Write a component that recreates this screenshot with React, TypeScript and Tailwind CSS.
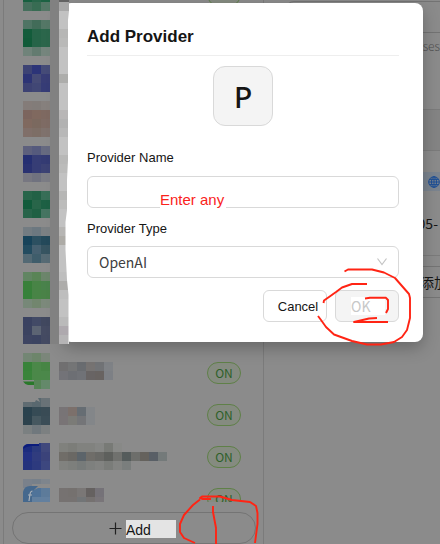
import { useState, type ReactNode } from "react";

type Provider = {
  offset: number;
  avatar: string[][];
  detail?: ReactNode;
  nameTop?: number;
  name?: string[][];
};

const CELL = 9;

const providers: Provider[] = [
  { offset: 19, avatar: [["#175f3f", "#28664a", "#1c6243"], ["#456f5c", "#386c53", "#547766"]] },
  { offset: 4, avatar: [["#4f7464", "#426c59", "#547766"], ["#135c3b", "#266448", "#2b664b"], ["#115b39", "#266448", "#2b664b"], ["#70837a", "#637b70", "#75857d"]] },
  { offset: 7, avatar: [["#3d4374", "#2c3478", "#454b77"], ["#2d3475", "#464b76", "#383d75"], ["#3d4273", "#414775", "#363c76"]] },
  { offset: 1, avatar: [["#847c79", "#827c79", "#86807d"], ["#7c655e", "#80695f", "#7e6961"], ["#80695f", "#7b695f", "#7e6b64"], ["#806f69", "#7d6e66", "#7f726d"]] },
  { offset: 4, avatar: [["#5d607d", "#555a7d", "#666a80"], ["#252f72", "#363d75", "#343b73"], ["#2a3271", "#363d75", "#3c4274"], ["#777781", "#70727f", "#7b7c84"]] },
  { offset: 7, avatar: [["#28654a", "#226146", "#376e57"], ["#115b3b", "#286549", "#1d6044"], ["#28644a", "#1f6043", "#457461"]] },
  { offset: 1, avatar: [["#737c82", "#6c7880", "#7b8083"], ["#17435a", "#2c5061", "#24495a"], ["#234c60", "#466070", "#375461"], ["#536974", "#3f5d6b", "#566a74"]] },
  { offset: 4, avatar: [["#618562", "#598456", "#6c856b"], ["#39803a", "#488446", "#49824b"], ["#36813a", "#488446", "#4a8247"], ["#778878", "#72866e", "#7c897b"]] },
  { offset: 7, avatar: [["#3a4261", "#424a66", "#41485f"], ["#3b4360", "#5c6473", "#454b62"], ["#3e4562", "#3c4461", "#444a62"]] },
  {
    offset: 1,
    avatar: [["#738674", "#6d856b", "#7b867a"], ["#38833a", "#4b8849", "#478545"], ["#3a843b", "#4b8849", "#4b884a"], ["#8b8b8b", "#568556", "#64896a"]],
    detail: (
      <>
        <rect x="9" y="27" width="2" height="9" fill="#8b8b8b" />
        <path d="M0 28.500H11V32H5Q2 31.500 0 28.500Z" fill="#29792a" shapeRendering="auto" />
      </>
    ),
    nameTop: 10,
    name: [["#706f70", "#747576", "#696c70", "#767372", "#717376", "#7f8286"], ["#737378", "#6d6f74", "#707277", "#686464", "#686361", "#7d8085"]],
  },
  {
    offset: 4,
    avatar: [["#606c72", "#59686f", "#697277"], ["#2a424e", "#364b55", "#394b55"], ["#2c424d", "#465860", "#3b4d57"], ["#7b8081", "#70787d", "#7c8081"]],
    detail: (
      <path d="M0 0H15L17 4L13 2L12 4H0Z" fill="#8b8b8b" shapeRendering="auto" />
    ),
    nameTop: 13,
    name: [["#787476", "#7c706b", "#666d73", "#838689"], ["#797476", "#7b7b77", "#747578", "#838689"]],
  },
  {
    offset: 7,
    avatar: [["#1c2c7f", "#2b3a7d", "#40487c"], ["#233183", "#303c7e", "#3b437a"], ["#24337d", "#2d3a7e", "#3d477f"]],
    detail: (
      <>
        <path d="M0 0H16V1H6Q2 1 0 4Z" fill="#8b8b8b" shapeRendering="auto" />
        <path d="M0 6Q1 1 6 1H16V3H8Q3 3.500 0 6Z" fill="#0b1c7c" shapeRendering="auto" />
      </>
    ),
    nameTop: 7,
    name: [
      ["#80817d", "#7c7d79", "#81827f", "#81827f", "#858684", "#787a76", "#888987"],
      ["#706d68", "#6a6864", "#5c646a", "#6f6d69", "#696966", "#5e605d", "#70716e", "#555c5c", "#6d6e6b", "#65625d", "#595f66", "#747a7a"],
      ["#81827f", "#7d7f7c", "#777b7a", "#7e807e", "#828381", "#7a7c79", "#838482", "#7a7e7d"],
    ],
  },
  {
    offset: 1,
    avatar: [["#7a818b", "#77808a", "#7e858d"], ["#8b8b8b", "#4f7399", "#5d7b9a"], ["#8b8b8b", "#62809f", "#63809f"]],
    detail: (
      <>
        <path d="M9 5H27V9H15L9 12Z" fill="#8b8b8b" shapeRendering="auto" />
        <path d="M0 23V13Q1 7 7 7H15L9 13V23Z" fill="#45688d" shapeRendering="auto" />
        <path d="M9.500 12Q7.500 12 7 15L6 22M5 16H9" stroke="#a9b1ba" strokeWidth="1.2" fill="none" shapeRendering="auto" />
      </>
    ),
    nameTop: 10,
    name: [["#767271", "#75716f", "#7a7776", "#656160", "#757278"], ["#767271", "#767271", "#727577", "#757170", "#797579"]],
  },
];

function Mosaic({ cells, children }: { cells: string[][]; children?: ReactNode }) {
  const cols = Math.max(...cells.map((r) => r.length));
  return (
    <svg width={cols * CELL} height={cells.length * CELL} shapeRendering="crispEdges" aria-hidden="true">
      {cells.map((row, y) =>
        row.map((fill, x) => (
          <rect key={`${x}-${y}`} x={x * CELL} y={y * CELL} width={CELL} height={CELL} fill={fill} />
        )),
      )}
      {children}
    </svg>
  );
}

function ProviderRow({ provider }: { provider: Provider }) {
  return (
    <li className="flex h-[42px] shrink-0 items-start pr-[22px] pl-[19px]">
      <div style={{ paddingTop: provider.offset }} className="w-9 shrink-0">
        <Mosaic cells={provider.avatar}>{provider.detail}</Mosaic>
      </div>
      <div style={{ paddingTop: provider.nameTop ?? 0 }} className="min-w-0 flex-1">
        {provider.name && <Mosaic cells={provider.name} />}
      </div>
      <span className="mt-[10px] flex h-[22px] w-[34px] shrink-0 items-center justify-center rounded-full border border-[#5f8048] bg-[#858b80] font-['Noto_Sans_CJK_SC',sans-serif] text-xs text-[#2c6029]">
        ON
      </span>
    </li>
  );
}

function Sidebar() {
  return (
    <aside className="ml-[3px] flex w-[261px] shrink-0 flex-col border-x border-[#7b7b7b]">
      <div className="min-h-0 flex-1 overflow-hidden">
        <ul className="-mt-[26px] flex flex-col">
          {providers.map((p, i) => (
            <ProviderRow key={i} provider={p} />
          ))}
        </ul>
      </div>
      <div className="pt-[10px] pr-[7px] pl-2">
        <button
          type="button"
          className="flex h-8 w-full items-center rounded-full border border-[#747474] pl-24 font-['Liberation_Sans',Arial,sans-serif] text-sm text-[#151515]"
        >
          <svg width="13" height="13" viewBox="0 0 13 13" stroke="#202020" strokeWidth="1.2" aria-hidden="true">
            <path d="M6.5 .5v12M.5 6.5h12" />
          </svg>
          <span className="mt-0.5 ml-1 h-[18px] w-[50px] bg-[#e4e4e4] text-left leading-5">Add</span>
        </button>
      </div>
    </aside>
  );
}

function GlobeIcon() {
  return (
    <svg width="12" height="12" viewBox="0 0 12 12" fill="none" stroke="#1d4f96" strokeWidth="1" className="shrink-0" aria-hidden="true">
      <circle cx="6" cy="6" r="5.3" />
      <ellipse cx="6" cy="6" rx="2.5" ry="5.3" />
      <path d="M6 .7v10.6M.7 6h10.6M1.5 3.4h9M1.5 8.6h9" />
    </svg>
  );
}

function DetailPanel() {
  return (
    <main className="flex min-w-0 flex-1 flex-col overflow-hidden pt-px pl-[22px] font-['Noto_Sans_CJK_SC',sans-serif]">
      <div className="h-8 shrink-0 rounded-tl-lg border-t border-b border-l border-[#737373]" />
      <div className="flex h-[76px] shrink-0 justify-end pt-1 text-xs leading-[18px] font-light text-[#4f4f4f]">
        nses
      </div>
      <div className="h-[42px] shrink-0 border-y border-[#7b7b7b] bg-[#848484]" />
      <div className="flex h-[60px] shrink-0 items-end justify-end pb-5">
        <span className="flex h-[19px] w-8 shrink-0 items-center justify-end rounded-l-full bg-[#7b848f]">
          <GlobeIcon />
        </span>
      </div>
      <div className="flex h-[45px] shrink-0 justify-end border-b border-[#7b7b7b] pr-0.5 text-sm leading-6 text-[#151515]">
        05-
      </div>
      <div className="mt-[10px] flex h-8 shrink-0 items-center justify-end overflow-hidden border-y border-[#747474] text-sm text-[#151515]">
        <span className="-mr-2 whitespace-nowrap">添加</span>
      </div>
    </main>
  );
}

const edge = ["#a9a9a9", "#c2c2c2", "#c2c2c2", "#b6b6b5", "#b9b9b8", "#c2c2c2", "#c2c2c2", "#c2c2c2", "#adadab", "#c2c2c2", "#c2c2c2", "#c2c2c2", "#b8b6b6", "#b2b2b2", "#b8b8b8", "#c2c2c2", "#c2c2c2", "#b8b8b7", "#bbbbba", "#c2c2c2", "#c2c2c2", "#b6b6b5", "#bcbcbb", "#c2c2c2", "#c2c2c2", "#b6b5b3", "#adaba6", "#c2c2c2", "#c2c2c2", "#c2c2c2", "#bebebe", "#aeadab", "#bebebe", "#c2c2c2", "#c2c2c2", "#bababa", "#aea9ae", "#b5b4b5"];

function EdgeStrip() {
  return (
    <svg
      width="19"
      height="344"
      viewBox="0 0 19 344"
      className="pointer-events-none absolute top-0 left-[50px]"
      shapeRendering="crispEdges"
      aria-hidden="true"
    >
      <rect width="9" height="344" fill="#818181" />
      <rect x="9" width="10" height="2" fill="#636363" />
      {edge.map((fill, i) => (
        <rect key={i} x="9" y={2 + i * CELL} width="9.5" height={CELL} fill={fill} />
      ))}
      <path
        d="M19 11L18 20V160L17 180L17 210L15.500 222L15.500 250L17 280L18.500 295V344H19Z"
        fill="#fff"
        shapeRendering="auto"
      />
    </svg>
  );
}

function AddProviderDialog() {
  const [name, setName] = useState("");
  const [kind, setKind] = useState("OpenAI");
  return (
    <div className="absolute inset-0 flex items-start pt-[3px] pr-[17px] pl-[63px]">
      <form
        role="dialog"
        aria-labelledby="dialog-title"
        onSubmit={(e) => e.preventDefault()}
        className="flex flex-1 flex-col rounded-lg bg-white px-6 pb-5 font-['Liberation_Sans',Arial,sans-serif] text-[13px] text-[#151515] shadow-[0_6px_16px_rgba(0,0,0,0.25)]"
      >
        <h2 id="dialog-title" className="border-b border-[#eeeeee] pt-[22px] pb-1.5 text-[17px] leading-6 font-bold">
          Add Provider
        </h2>
        <div className="mt-[10px] flex size-[60px] items-center justify-center self-center rounded-xl border border-[#d9d9d9] bg-[#f4f4f4] font-['Noto_Sans_CJK_SC',sans-serif] text-[28px] font-medium">
          P
        </div>
        <label htmlFor="provider-name" className="mt-[22px] leading-5">
          Provider Name
        </label>
        <div className="relative mt-2 h-8">
          <input
            id="provider-name"
            value={name}
            onChange={(e) => setName(e.target.value)}
            className="h-8 w-full rounded-md border border-[#d9d9d9] bg-white px-[11px] outline-none"
          />
          <span className="pointer-events-none absolute top-3.5 left-[73px] bg-white pr-0.5 text-[15px] leading-5 text-[#fa231c]">
            Enter any
          </span>
        </div>
        <label htmlFor="provider-type" className="mt-[11px] leading-5">
          Provider Type
        </label>
        <div className="relative mt-[7px] h-8">
          <select
            id="provider-type"
            value={kind}
            onChange={(e) => setKind(e.target.value)}
            className="h-8 w-full appearance-none rounded-md border border-[#d9d9d9] bg-white px-[11px] font-['Noto_Sans_CJK_SC',sans-serif] text-sm text-[#404040] outline-none"
          >
            <option>OpenAI</option>
          </select>
          <svg
            width="10"
            height="8"
            viewBox="0 0 10 8"
            fill="none"
            stroke="#c4c4c4"
            strokeWidth="1.2"
            className="pointer-events-none absolute top-3 right-3"
            aria-hidden="true"
          >
            <path d="M.5 .5l4.500 6 4.500-6" />
          </svg>
        </div>
        <div className="mt-3 flex justify-end gap-2">
          <button type="button" className="h-8 w-16 rounded-md border border-[#d9d9d9] bg-white pt-0.5 pl-1.5">
            Cancel
          </button>
          <button
            type="submit"
            disabled
            className="flex h-8 w-16 items-center rounded-md border border-[#d9d9d9] bg-[#f4f4f4] pl-[15px] font-['Noto_Sans_CJK_SC',sans-serif] text-sm text-[#c8c8c8]"
          >
            <span className="h-[18px] w-[34px] bg-white text-left leading-[18px]">OK</span>
          </button>
        </div>
      </form>
      <EdgeStrip />
    </div>
  );
}

function Annotations() {
  return (
    <svg
      width="440"
      height="544"
      viewBox="0 0 440 544"
      fill="none"
      stroke="#ff2414"
      strokeWidth="1.9"
      strokeLinejoin="round"
      className="pointer-events-none absolute top-0 left-0"
      aria-hidden="true"
    >
      <path d="M344.500 271.500L348 269.500L372 269.500L384 272.500L395 278L402 286L409 294L410 298V318L407 330L402 337L394 342L381 344.500H367L352 341L334 334.500L326 327L321 320L318 316" />
      <path d="M367 284L352 284L342 287.500L336 292L329 297L324 300.500L323.500 303" />
      <path d="M365 298.500L370 297.800H386L388 300V309L386 313M377 318L369 318.500L354 322H388" />
      <path d="M211 499H203L200 498L202 496.500H220L232 500L250 502L256 506L257.500 513V524L255 543M200 499.500L193 505L184 515L180 524V532L184 538L195 543" />
      <path d="M213 506V512L216 528V544" />
    </svg>
  );
}

export default function App() {
  return (
    <div className="relative flex h-screen overflow-hidden bg-[#8b8b8b]">
      <Sidebar />
      <DetailPanel />
      <AddProviderDialog />
      <Annotations />
    </div>
  );
}
